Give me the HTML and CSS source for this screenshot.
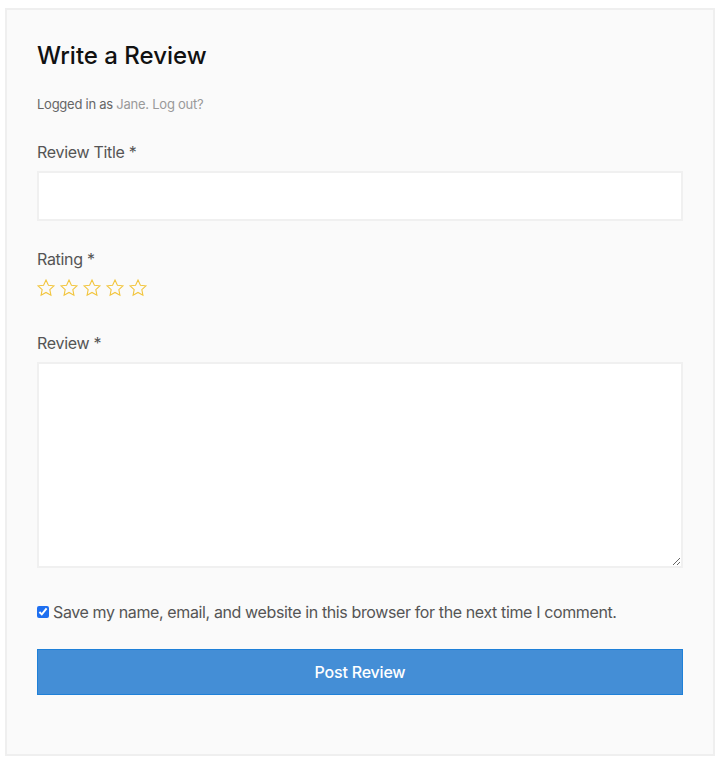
FILE: index.html
```
<!DOCTYPE html>
<html>
<head>
<meta charset="utf-8">
<link rel="stylesheet" href="styles.css">
</head>
<body>
<div class="review-box">
  <h3 class="title">Write a Review</h3>
  <p class="logged">Logged in as <a class="muted" href="#">Jane</a><span class="muted">.</span> <a class="muted" href="#">Log out?</a></p>
  <form class="form">
    <div class="field field-title">
      <label class="label">Review Title *</label>
      <input class="input" type="text">
    </div>
    <div class="field field-rating">
      <label class="label">Rating *</label>
      <div class="stars">
        <svg class="star" viewBox="0 0 24 24"><path d="M12 2.5l2.9 6.1 6.6.8-4.9 4.6 1.3 6.6L12 17.3l-5.9 3.3 1.3-6.6-4.9-4.6 6.6-.8z"/></svg>
        <svg class="star" viewBox="0 0 24 24"><path d="M12 2.5l2.9 6.1 6.6.8-4.9 4.6 1.3 6.6L12 17.3l-5.9 3.3 1.3-6.6-4.9-4.6 6.6-.8z"/></svg>
        <svg class="star" viewBox="0 0 24 24"><path d="M12 2.5l2.9 6.1 6.6.8-4.9 4.6 1.3 6.6L12 17.3l-5.9 3.3 1.3-6.6-4.9-4.6 6.6-.8z"/></svg>
        <svg class="star" viewBox="0 0 24 24"><path d="M12 2.5l2.9 6.1 6.6.8-4.9 4.6 1.3 6.6L12 17.3l-5.9 3.3 1.3-6.6-4.9-4.6 6.6-.8z"/></svg>
        <svg class="star" viewBox="0 0 24 24"><path d="M12 2.5l2.9 6.1 6.6.8-4.9 4.6 1.3 6.6L12 17.3l-5.9 3.3 1.3-6.6-4.9-4.6 6.6-.8z"/></svg>
      </div>
    </div>
    <div class="field">
      <label class="label">Review *</label>
      <textarea class="textarea"></textarea>
    </div>
    <label class="consent"><input class="check" type="checkbox" checked> Save my name, email, and website in this browser for the next time I comment.</label>
    <button class="submit" type="button">Post Review</button>
  </form>
</div>
</body>
</html>
```
FILE: styles.css
```
html, body { margin: 0; padding: 0; background: #fff; }
body { font-family: Inter, "Noto Sans", sans-serif; color: #555; }
.review-box {
  margin: 8px 5px 0 5px;
  width: 710px;
  height: 748px;
  box-sizing: border-box;
  border: 2px solid #efefef;
  background: #fafafa;
  padding: 30px 30px 0 30px;
}
.title {
  margin: 0;
  font-size: 24px;
  line-height: 32px;
  font-weight: 500;
  color: #111;
}
.logged {
  margin: 22px 0 0 0;
  font-size: 13px;
  line-height: 20px;
  letter-spacing: -0.25px;
  color: #666;
}
.muted { color: #999; text-decoration: none; }
.form { margin-top: 27px; }
.field { margin-bottom: 26px; }
.field-title { margin-bottom: 27px; }
.field-rating { margin-bottom: 34px; }
.label { display: block; font-size: 16px; line-height: 22px; letter-spacing: -0.3px; color: #555; margin-bottom: 8px; }
.input {
  display: block; box-sizing: border-box; width: 100%; height: 50px;
  border: 2px solid #f0f0f0; background: #fff; margin: 0; outline: none;
}
.stars { display: flex; gap: 3px; margin-top: 3px; margin-left: -1px; }
.star { width: 20px; height: 20px; fill: none; stroke: #f2c53d; stroke-width: 1.3; stroke-linejoin: miter; }
.textarea {
  display: block; box-sizing: border-box; width: 100%; height: 206px;
  border: 2px solid #f0f0f0; background: #fff; margin: 0; resize: vertical; outline: none;
}
.consent { display: flex; align-items: center; gap: 4px; font-size: 16px; line-height: 22px; letter-spacing: -0.38px; color: #555; margin-top: 33px; }
.check { margin: 0; width: 12px; height: 12px; accent-color: #1e6ff0; }
.submit {
  display: block; width: 100%; height: 46px; margin-top: 26px;
  background: #448ed6; border: 1px solid #1f80d8; color: #fff;
  font-family: Inter, "Noto Sans", sans-serif; font-size: 16px; font-weight: 500; letter-spacing: -0.2px;
}
```
